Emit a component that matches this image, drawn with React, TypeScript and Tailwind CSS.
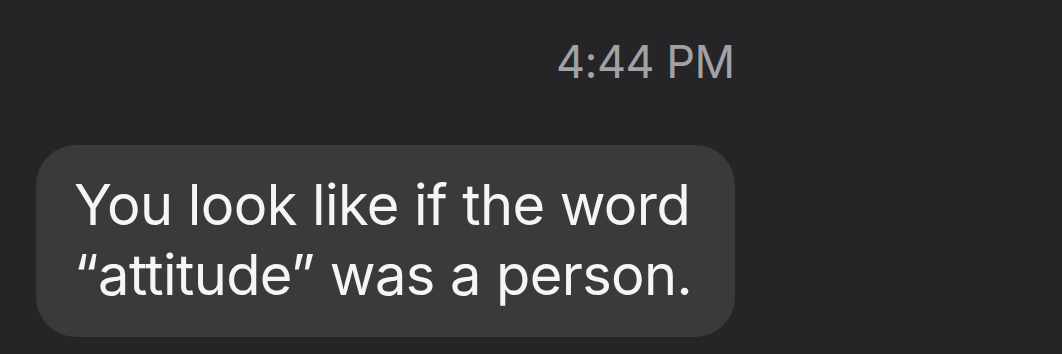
export default function App() {
    return (
        <div
            className="w-[1062px] h-[354px] bg-[#252527] overflow-hidden"
            style={{ fontFamily: 'Inter, "Liberation Sans", sans-serif' }}>
            <div className="pt-[36px] pl-[556px] text-[45px] leading-[52px] text-[#a1a1a6] tracking-[-0.5px]">
                4:44 PM
            </div>
            <div className="mt-[57px] ml-[36px] w-[699px] h-[192px] rounded-[40px] bg-[#3a3a3c] pl-[38px] pt-[25px]">
                <p className="text-[56px] leading-[70px] text-[#f5f5f7] tracking-[-0.6px]">
                    You look like if the word
                    <br />
                    “attitude” was a person.
                </p>
            </div>
        </div>
    )
}
